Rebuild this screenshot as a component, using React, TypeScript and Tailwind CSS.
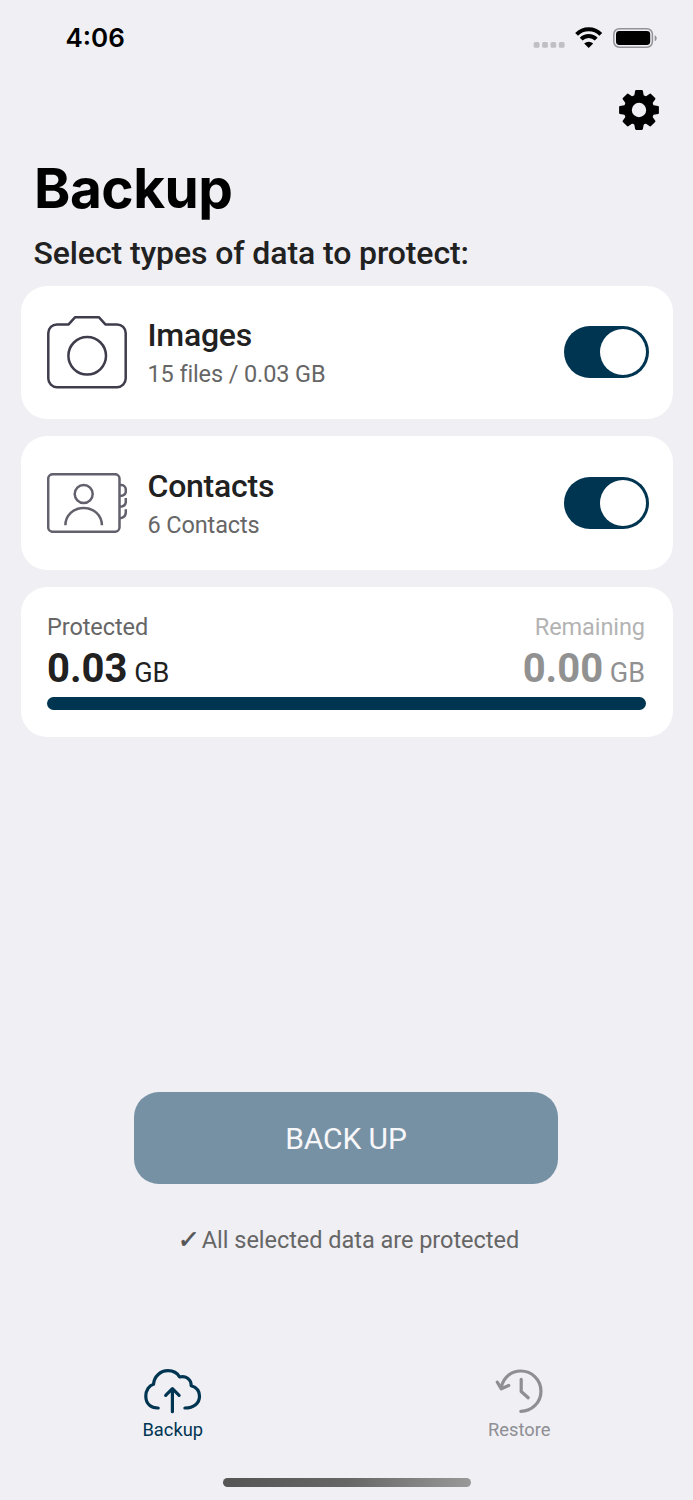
import { useState } from 'react';
import type { ReactNode } from 'react';

const NAVY = '#003552';

function StatusBar() {
  return (
    <div className="flex h-[76px] items-center justify-between pl-[65.5px] pr-[36px]">
      <span className="font-[Inter,sans-serif] text-[26px] font-semibold leading-none text-black">
        4:06
      </span>
      <svg width="124" height="24" viewBox="0 0 124 24" fill="none">
        {/* sem sinal */}
        {[0.7, 9.1, 17.5, 25.8].map((x) => (
          <rect key={x} x={x} y="16" width="5.8" height="5.8" rx="1.6" fill="#bfbfc4" />
        ))}
        {/* wifi */}
        <g stroke="#000" strokeWidth="4">
          <path d="M43.6 8.3a17 17 0 0 1 24.2 0" />
          <path d="M48.2 13.2a10.6 10.6 0 0 1 15 0" />
        </g>
        <path d="M51.2 17.6a6.4 6.4 0 0 1 9 0l-4.5 4.4z" fill="#000" />
        {/* bateria */}
        <rect x="80.8" y="2.8" width="38.6" height="18.4" rx="5.4" stroke="#929297" strokeWidth="1.5" />
        <rect x="83" y="5" width="34.2" height="14" rx="3.4" fill="#000" />
        <path d="M121.7 9.2c2.6 1 2.6 5 0 6z" fill="#929297" />
      </svg>
    </div>
  );
}

function GearIcon() {
  return (
    <svg width="40" height="40" viewBox="-20 -20 40 40" className="text-black">
      {[0, 45, 90, 135, 180, 225, 270, 315].map((angle) => (
        <path
          key={angle}
          d="M-5-13-3.9-19.1Q-3.7-19.9-2.9-19.9H2.9Q3.7-19.9 3.9-19.1L5-13z"
          transform={`rotate(${angle})`}
          fill="currentColor"
        />
      ))}
      <circle r="11.2" stroke="currentColor" strokeWidth="8" fill="none" />
    </svg>
  );
}

function CameraIcon() {
  return (
    <svg width="80" height="74" viewBox="0 0 80 74" fill="none" stroke="#3f3c4b" strokeWidth="2.5">
      <path
        d="M10 9.4h11.6l6.6-7.2h23.6l6.6 7.2H70a8.7 8.7 0 0 1 8.7 8.7v45.4a8.7 8.7 0 0 1-8.7 8.7H10a8.7 8.7 0 0 1-8.7-8.7V18.1A8.7 8.7 0 0 1 10 9.4z"
        strokeLinejoin="round"
      />
      <circle cx="40.2" cy="40.8" r="18.8" />
    </svg>
  );
}

function ContactsIcon() {
  return (
    <svg width="80" height="60" viewBox="0 0 80 60" fill="none" stroke="#62606c" strokeWidth="2.5">
      <rect x="1.2" y="1.2" width="71.3" height="57.6" rx="4.5" />
      <circle cx="36.7" cy="21" r="9" />
      <path d="M18.4 52.3c0-10 8-17.4 18.2-17.4S54.9 42.3 54.9 52.3" />
      <path d="M73 12h1.500c2.500 0 4.300 2.200 4.300 5v1.500c0 2.600-2 4.200-5.800 4.500M78.800 25v3.500c0 3-2 5-5.800 5.300M78.800 36.300v3c0 3-2 5.500-5.800 6" />
    </svg>
  );
}

function CloudUpIcon() {
  return (
    <svg
      width="58"
      height="46"
      viewBox="0 0 58 46"
      fill="none"
      stroke="currentColor"
      strokeWidth="3.2"
      strokeLinecap="round"
      strokeLinejoin="round"
    >
      <path d="M14.2 40C7.200 40.300 1.800 36 1.800 28.300 1.800 22 5.200 17.300 9.500 16.300 10.200 8.200 16.500 2.700 24 2.700c5 0 9.300 2.300 11.600 6.300 6-1.500 11.600 2 11.600 8.700 5 1.500 8.300 5.500 8.300 10.500 0 7-5.600 11.800-14.600 11.800" />
      <path d="M28.400 43.700V21.500M21.700 27.300l6.700-6.600 6.700 6.600" />
    </svg>
  );
}

function HistoryIcon() {
  return (
    <svg
      width="50"
      height="46"
      viewBox="0 0 50 46"
      fill="none"
      stroke="currentColor"
      strokeWidth="3.2"
      strokeLinecap="round"
      strokeLinejoin="round"
    >
      <path d="M7.4 18.500C10.200 8.500 17.700 3 26.800 3a20.100 20.100 0 0 1 0 40.300" />
      <path d="M3.300 14.200l4 6.600 7.400-3.300" />
      <path d="M27.200 11.300v12.200l7 6.200" />
    </svg>
  );
}

interface ToggleProps {
  on: boolean;
  onChange: () => void;
  label: string;
}

function Toggle({ on, onChange, label }: ToggleProps) {
  return (
    <button
      role="switch"
      aria-checked={on}
      aria-label={label}
      onClick={onChange}
      className={`flex h-[52px] w-[85.5px] items-center rounded-full px-[3px] ${
        on ? 'justify-end bg-[#003552]' : 'justify-start bg-[#d1d1d6]'
      }`}
    >
      <span className="size-[46px] rounded-full bg-white" />
    </button>
  );
}

interface DataCardProps {
  icon: ReactNode;
  title: string;
  detail: string;
}

function DataCard({ icon, title, detail }: DataCardProps) {
  const [on, setOn] = useState(true);

  return (
    <div className="flex h-[133.5px] items-center rounded-[26px] bg-white pl-[26.5px] pr-[23.5px]">
      {icon}
      <div className="ml-[20.5px] flex-1">
        <p className="text-[32px] font-medium leading-[38px] tracking-[-0.25px] text-[#212121]">
          {title}
        </p>
        <p className="mt-[6px] text-[23.5px] leading-[28px] tracking-[-0.12px] text-[#666]">{detail}</p>
      </div>
      <Toggle on={on} onChange={() => setOn(!on)} label={title} />
    </div>
  );
}

export default function App() {
  return (
    <div className="flex h-[1500px] w-[693px] flex-col bg-[#efeff4] font-[Roboto,sans-serif]">
      <StatusBar />

      <header className="flex h-[53.5px] items-end justify-end pr-[34px]">
        <GearIcon />
      </header>

      <h1 className="mt-[27.5px] pl-[34px] font-[Inter,sans-serif] text-[55px] font-bold leading-[62px] tracking-[-0.5px] text-black">
        Backup
      </h1>
      <h2 className="mt-[15px] pl-[33.5px] text-[32px] font-medium leading-[38px] tracking-[-0.1px] text-[#212121]">
        Select types of data to protect:
      </h2>

      <main className="mt-[13.5px] flex flex-col gap-[17px] px-[20.5px]">
        <DataCard icon={<CameraIcon />} title="Images" detail="15 files / 0.03 GB" />
        <DataCard icon={<ContactsIcon />} title="Contacts" detail="6 Contacts" />

        {/* Resumo do espaço usado */}
        <section className="h-[150.5px] rounded-[26px] bg-white px-[26.5px] pt-[26px]">
          <div className="flex justify-between pr-px text-[23.5px] leading-[28px] tracking-[-0.08px]">
            <span className="text-[#666]">Protected</span>
            <span className="text-[#b3b3b3]">Remaining</span>
          </div>
          <div className="mt-[4px] flex justify-between pr-px text-[27px] leading-[47px]">
            <p className="text-[#212121]">
              <b className="text-[40px] font-bold">0.03</b> GB
            </p>
            <p className="text-[#919191]">
              <b className="text-[40px] font-bold">0.00</b> GB
            </p>
          </div>
          <div className="h-[13.5px] rounded-full" style={{ backgroundColor: NAVY }} />
        </section>
      </main>

      <div className="mt-[355px] flex flex-col items-center pr-px">
        <button className="h-[92px] w-[424px] rounded-[25px] bg-[#7791a4] text-[30px] tracking-[-0.1px] text-[#f7f7fa]">
          BACK UP
        </button>
        <p className="mt-[41.5px] flex gap-[3px] pl-[5px] text-[23.5px] leading-[28px] tracking-[-0.03px] text-[#666]">
          <span className="-skew-x-6 font-['DejaVu_Sans'] text-[25px] font-bold text-[#555] [-webkit-text-stroke:0.6px_#555]">
            ✓
          </span>
          <span>All selected data are protected</span>
        </p>
      </div>

      <nav className="mt-[114.5px] flex text-[18.3px] leading-[22px]">
        <a className="flex flex-1 flex-col items-center gap-[5px] pr-px text-[#003552]">
          <CloudUpIcon />
          Backup
        </a>
        <a className="flex flex-1 flex-col items-center gap-[5px] pr-px text-[#8e8e93]">
          <HistoryIcon />
          Restore
        </a>
      </nav>

      <div className="mx-auto mb-[13.5px] mt-auto h-[9px] w-[248px] rounded-full bg-linear-to-r from-[#555] via-[#666] to-[#999]" />
    </div>
  );
}
